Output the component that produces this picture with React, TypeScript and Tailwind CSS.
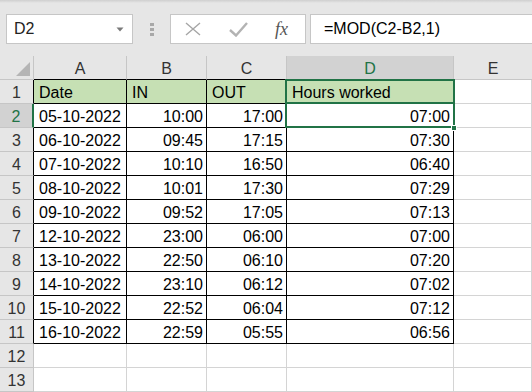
import React from "react";

const rows: [string, string, string, string][] = [
  ["05-10-2022", "10:00", "17:00", "07:00"],
  ["06-10-2022", "09:45", "17:15", "07:30"],
  ["07-10-2022", "10:10", "16:50", "06:40"],
  ["08-10-2022", "10:01", "17:30", "07:29"],
  ["09-10-2022", "09:52", "17:05", "07:13"],
  ["12-10-2022", "23:00", "06:00", "07:00"],
  ["13-10-2022", "22:50", "06:10", "07:20"],
  ["14-10-2022", "23:10", "06:12", "07:02"],
  ["15-10-2022", "22:52", "06:04", "07:12"],
  ["16-10-2022", "22:59", "05:55", "06:56"],
];

const font = { fontFamily: '"Liberation Sans", Arial, sans-serif' };

function RowHeader({ n }: { n: number }) {
  const inTable = n <= 11;
  const sel = n === 2;
  let cls =
    "h-[24px] border-b border-[#c6c6c6] flex items-end justify-center pb-[1px] leading-[18px] text-[16px] ";
  if (sel) cls += "bg-[#d2d2d2] text-[#217346] border-r-2 border-r-[#217346]";
  else if (inTable) cls += "bg-[#e6e6e6] text-[#333] border-r border-r-black";
  else cls += "bg-[#e6e6e6] text-[#333] border-r border-r-[#c6c6c6]";
  return <div className={cls}>{n}</div>;
}

export default function App() {
  const cellBase =
    "h-[24px] flex items-end pb-[1px] leading-[18px] text-[16px] text-black border-r border-b ";
  return (
    <div className="w-[532px] h-[392px] overflow-hidden bg-white" style={font}>
      {/* formula bar */}
      <div className="h-[56px] bg-[#e6e6e6] flex flex-col">
        <div className="h-[3px] bg-gradient-to-b from-[#cfcfcf] to-[#e6e6e6]" />
        <div className="flex items-start pt-[11px]">
          <div className="ml-[6px] w-[127px] h-[30px] bg-white border border-[#c6c6c6] flex items-center justify-between pl-[7px] pr-[8px]">
            <span className="text-[16px] text-[#222] leading-none">D2</span>
            <svg width="8" height="5" viewBox="0 0 8 5">
              <path d="M0.5 0.5 L7.5 0.5 L4 4.5 Z" fill="#7a7a7a" />
            </svg>
          </div>
          <div className="w-[37px] h-[30px] flex flex-col items-center justify-center gap-[2px]">
            <div className="w-[4px] h-[3px] bg-[#a8a8a8]" />
            <div className="w-[4px] h-[3px] bg-[#a8a8a8]" />
            <div className="w-[4px] h-[3px] bg-[#a8a8a8]" />
          </div>
          <div className="w-[136px] h-[30px] bg-white border border-[#c6c6c6] flex items-center">
            <svg className="ml-[14px]" width="17" height="14" viewBox="0 0 17 14">
              <path d="M1 1 L15 13 M15 1 L1 13" stroke="#a6a6a6" strokeWidth="1.4" fill="none" />
            </svg>
            <svg className="ml-[27px]" width="19" height="15" viewBox="0 0 19 15">
              <path d="M1 8 L7 13.5 L18 1" stroke="#b3b3b3" strokeWidth="2.4" fill="none" />
            </svg>
            <span
              className="ml-[27px] text-[18px] text-[#555] italic leading-none"
              style={{ fontFamily: '"Liberation Serif", "Times New Roman", serif' }}
            >
              fx
            </span>
          </div>
          <div className="ml-[4px] flex-1 h-[30px] bg-white border border-r-0 border-[#c6c6c6] flex items-center pl-[13px]">
            <span className="text-[16px] text-black leading-none">=MOD(C2-B2,1)</span>
          </div>
        </div>
      </div>

      {/* grid */}
      <div className="relative">
        <div className="grid grid-cols-[34px_93px_80px_80px_167px_78px]">
          {/* header row */}
          <div className="h-[24px] bg-[#e6e6e6] border-r border-b border-[#c6c6c6] relative">
            <svg className="absolute right-[3px] bottom-[3px]" width="14" height="14" viewBox="0 0 14 14">
              <path d="M14 0 L14 14 L0 14 Z" fill="#b5b5b5" />
            </svg>
          </div>
          {["A", "B", "C"].map((c) => (
            <div
              key={c}
              className="h-[24px] bg-[#e6e6e6] border-r border-r-[#c6c6c6] border-b border-b-black flex items-end justify-center pb-[1px] leading-[18px] text-[16px] text-[#333]"
            >
              {c}
            </div>
          ))}
          <div className="h-[24px] bg-[#d2d2d2] border-r border-r-[#c6c6c6] border-b border-b-[#217346] flex items-end justify-center pb-[1px] leading-[18px] text-[16px] text-[#217346]">
            D
          </div>
          <div className="h-[24px] bg-[#e6e6e6] border-b border-b-[#c6c6c6] flex items-end justify-center pb-[1px] leading-[18px] text-[16px] text-[#333]">
            E
          </div>

          {/* row 1 */}
          <RowHeader n={1} />
          <div className={cellBase + "bg-[#c6e0b4] border-black pl-[5px]"}>Date</div>
          <div className={cellBase + "bg-[#c6e0b4] border-black pl-[5px]"}>IN</div>
          <div className={cellBase + "bg-[#c6e0b4] border-black pl-[5px]"}>OUT</div>
          <div className={cellBase + "bg-[#c6e0b4] border-black pl-[5px]"}>Hours worked</div>
          <div className={cellBase + "border-[#d4d4d4]"} />

          {rows.map((r, i) => (
            <React.Fragment key={i}>
              <RowHeader n={i + 2} />
              <div className={cellBase + "border-black pl-[5px]"}>{r[0]}</div>
              <div className={cellBase + "border-black justify-end pr-[3px]"}>{r[1]}</div>
              <div className={cellBase + "border-black justify-end pr-[3px]"}>{r[2]}</div>
              <div className={cellBase + "border-black justify-end pr-[3px]"}>{r[3]}</div>
              <div className={cellBase + "border-[#d4d4d4]"} />
            </React.Fragment>
          ))}

          {[12, 13].map((n) => (
            <React.Fragment key={n}>
              <RowHeader n={n} />
              <div className={cellBase + "border-[#d4d4d4]"} />
              <div className={cellBase + "border-[#d4d4d4]"} />
              <div className={cellBase + "border-[#d4d4d4]"} />
              <div className={cellBase + "border-[#d4d4d4]"} />
              <div className={cellBase + "border-[#d4d4d4]"} />
            </React.Fragment>
          ))}
        </div>

        {/* selection overlays */}
        <div className="absolute left-[285px] top-[23px] w-[170px] h-[49px] border-2 border-[#217346] pointer-events-none" />
        <div className="absolute left-[285px] top-[46px] w-[170px] h-[2px] bg-[#217346] pointer-events-none" />
        <div className="absolute left-[451px] top-[69px] w-[6px] h-[6px] bg-[#217346] border border-white pointer-events-none" />
      </div>
    </div>
  );
}
